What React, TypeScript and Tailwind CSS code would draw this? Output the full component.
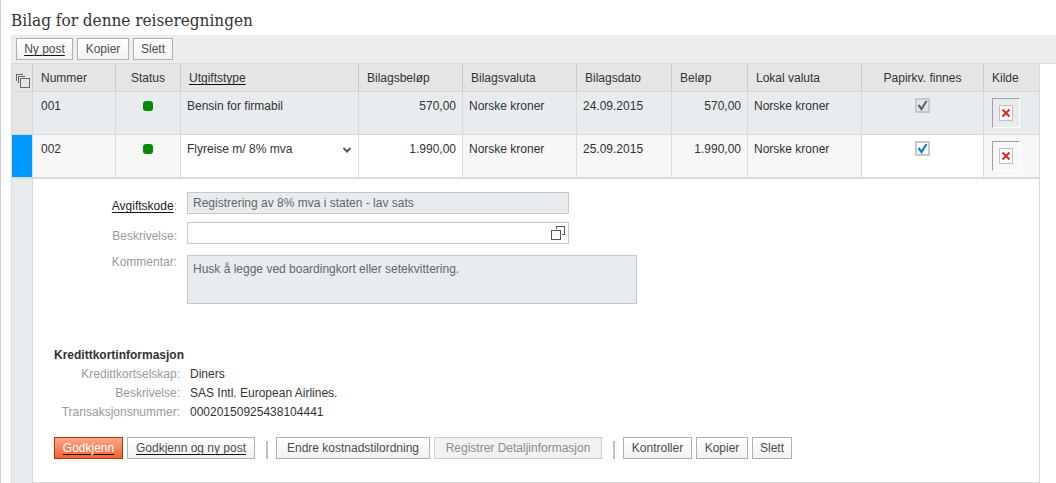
import { useState } from 'react';
import type { ReactNode } from 'react';

const link = 'underline decoration-1 decoration-[#111] underline-offset-2 [text-decoration-skip-ink:none]';

const columns = [
  { label: 'Nummer', width: 'w-[83px]', align: 'text-left' },
  { label: 'Status', width: 'w-[65px]', align: 'text-center' },
  { label: 'Utgiftstype', width: 'w-[178px]', align: 'text-left', sortable: true },
  { label: 'Bilagsbeløp', width: 'w-[104px]', align: 'text-left' },
  { label: 'Bilagsvaluta', width: 'w-[114px]', align: 'text-left' },
  { label: 'Bilagsdato', width: 'w-[95px]', align: 'text-left' },
  { label: 'Beløp', width: 'w-[76px]', align: 'text-left' },
  { label: 'Lokal valuta', width: 'w-[114px]', align: 'text-left' },
  { label: 'Papirkv. finnes', width: 'w-[122px]', align: 'text-center' },
  { label: 'Kilde', width: 'w-[56px]', align: 'text-left' },
];

const receipts = [
  { number: '001', type: 'Bensin for firmabil', amount: '570,00', currency: 'Norske kroner', date: '24.09.2015', selected: false },
  { number: '002', type: 'Flyreise m/ 8% mva', amount: '1.990,00', currency: 'Norske kroner', date: '25.09.2015', selected: true },
];

const cardInfo = [
  { label: 'Kredittkortselskap:', value: 'Diners' },
  { label: 'Beskrivelse:', value: 'SAS Intl. European Airlines.' },
  { label: 'Transaksjonsnummer:', value: '00020150925438104441' },
];

type ButtonProps = {
  children: ReactNode;
  width: string;
  primary?: boolean;
  underlined?: boolean;
  disabled?: boolean;
};

const Button = ({ children, width, primary, underlined, disabled }: ButtonProps) => {
  let look = 'border-[#b0b0b0] bg-linear-to-b from-white to-[#f2f2f2] text-[#4c4c4c]';
  if (primary) look = 'border-[#a83a10] bg-linear-to-b from-[#fba687] to-[#f2622e] text-white';
  if (disabled) look = 'border-[#cccccc] bg-[#f2f2f2] text-[#8c8c8c]';
  return (
    <button
      type="button"
      disabled={disabled}
      className={`h-[22px] shrink-0 border text-center leading-4 whitespace-nowrap ${width} ${look} ${underlined ? link : ''}`}
    >
      {children}
    </button>
  );
};

const Separator = () => <span className="ml-[7px] mr-1 h-[18px] w-0.5 self-end bg-[#c0c0c0]" />;

const StackIcon = () => (
  <svg width="14" height="14" viewBox="0 0 14 14" fill="none" stroke="#666" shapeRendering="crispEdges">
    <path d="M0.5 7V0.5H7M2.5 9V2.5H9" />
    <rect x="4.5" y="4.5" width="9" height="9" />
  </svg>
);

const PopupIcon = () => (
  <svg width="14" height="14" viewBox="0 0 14 14" fill="none" stroke="#555" shapeRendering="crispEdges">
    <path d="M5.5 3V0.5H13.5V8.5H11" />
    <rect x="0.5" y="4.5" width="9" height="9" />
  </svg>
);

const BrokenImage = () => (
  <span className="flex h-[30px] w-7 items-center justify-center border border-t-[#a0a0a0] border-r-white border-b-white border-l-[#a0a0a0]">
    <svg width="14" height="16" viewBox="0 0 14 16">
      <rect x="0.5" y="0.5" width="13" height="15" fill="#fff" stroke="#c0c0c0" />
      <path d="M3.5 4.5L10.5 11.5M10.5 4.5L3.5 11.5" stroke="#dd2a1b" strokeWidth="2" />
    </svg>
  </span>
);

const PaperCheckbox = ({ label, disabled }: { label: string; disabled: boolean }) => {
  const [checked, setChecked] = useState(true);
  return (
    <span className="relative mx-auto block size-[15px]">
      <input
        type="checkbox"
        aria-label={label}
        checked={checked}
        disabled={disabled}
        onChange={(e) => setChecked(e.target.checked)}
        className="block size-[15px] appearance-none border-2 border-[#c8c8c8] bg-white disabled:bg-[#dce8f1]"
      />
      {checked && (
        <svg className="pointer-events-none absolute inset-0" width="15" height="15" viewBox="0 0 15 15" fill="none">
          <path d="M3.5 7L6.5 11L11.5 3" stroke={disabled ? '#666' : '#0a84c6'} strokeWidth="2.2" />
        </svg>
      )}
    </span>
  );
};

const App = () => {
  return (
    <main className="min-h-screen border-l border-[#ccc] bg-white pl-2.5 font-['Liberation_Sans',Arial,sans-serif] text-[12px] leading-4 text-[#333]">
      <h1 className="h-[35px] pt-2 font-['DejaVu_Serif_Condensed','DejaVu_Serif',serif] text-[17px] leading-6 whitespace-nowrap">
        Bilag for denne reiseregningen
      </h1>

      <div className="flex gap-1 border-b border-[#d9d9d9] bg-[#ededed] pt-[3px] pb-[3px] pl-[5px]">
        <Button width="w-[57px]" underlined>Ny post</Button>
        <Button width="w-[52px]">Kopier</Button>
        <Button width="w-10">Slett</Button>
      </div>

      <div className="pr-4">
        <table className="w-full table-fixed border-separate border-spacing-0">
          <thead>
            <tr className="h-7 bg-[#e5e5e5]">
              <th className="w-[22px] border border-t-0 border-[#d9d9d9] border-r-[#c8c8c8] p-0 pt-[7px] pl-1" aria-label="Merk alle">
                <StackIcon />
              </th>
              {columns.map((col) => (
                <th
                  key={col.label}
                  className={`border-r border-b border-r-[#c8c8c8] border-b-[#d9d9d9] px-2 py-0 font-normal whitespace-nowrap last:border-r-[#d9d9d9] ${col.width} ${col.align}`}
                >
                  {col.sortable ? <a href="#utgiftstype" className={link}>{col.label}</a> : col.label}
                </th>
              ))}
            </tr>
          </thead>
          <tbody>
            {receipts.map((row) => {
              const edge = row.selected ? 'border-r border-b-2 border-[#dadada] py-0' : 'border-r border-b border-[#dadada] py-0';
              const base = `${edge} ${row.selected ? 'bg-[#f7f7f7]' : 'bg-[#e8ecef]'} pt-1.5 align-top whitespace-nowrap`;
              const editable = `${edge} ${row.selected ? 'bg-white' : 'bg-[#e8ecef]'} pt-1.5 align-top whitespace-nowrap`;
              return (
                <tr key={row.number} className={row.selected ? 'h-11' : 'h-[43px]'}>
                  <td className={`border-l ${edge} ${row.selected ? 'bg-[#0099ff]' : 'bg-[#e5e5e5]'}`} />
                  <td className={`${base} pl-2`}>{row.number}</td>
                  <td className={base}>
                    <span className="mx-auto mt-[3px] block size-2.5 rounded-[3px] bg-[#048a04]" />
                  </td>
                  <td className={editable}>
                    {row.selected ? (
                      <span className="relative block">
                        <select aria-label="Utgiftstype" className="block w-full appearance-none bg-transparent pl-1.5 leading-4">
                          <option>{row.type}</option>
                          <option>Bensin for firmabil</option>
                        </select>
                        <svg className="pointer-events-none absolute top-1.5 right-1.5" width="10" height="6" viewBox="0 0 10 6" fill="none">
                          <path d="M1.5 1L5 4.5L8.5 1" stroke="#555" strokeWidth="2" />
                        </svg>
                      </span>
                    ) : (
                      <span className="pl-1.5">{row.type}</span>
                    )}
                  </td>
                  <td className={`${editable} pr-1.5 text-right`}>{row.amount}</td>
                  <td className={`${base} pl-1.5`}>{row.currency}</td>
                  <td className={`${base} pl-1.5`}>{row.date}</td>
                  <td className={`${base} pr-1.5 text-right`}>{row.amount}</td>
                  <td className={`${base} pl-1.5`}>{row.currency}</td>
                  <td className={editable}>
                    <PaperCheckbox label={`Papirkvittering finnes ${row.number}`} disabled={!row.selected} />
                  </td>
                  <td className={`${base} pl-2`}>
                    <BrokenImage />
                  </td>
                </tr>
              );
            })}

            <tr>
              <td className="border-r border-l border-[#d9d9d9] bg-[#e8ecef]" />
              <td colSpan={10} className="border-r border-b border-[#dadada] p-0 pt-[13px] pb-[23px]">
                <div className="grid grid-cols-[144px_1fr] gap-x-2.5 text-[#999]">
                  <label htmlFor="avgiftskode" className="self-end text-right">
                    <span className={`text-[#222] ${link}`}>Avgiftskode</span>:
                  </label>
                  <input
                    id="avgiftskode"
                    readOnly
                    defaultValue="Registrering av 8% mva i staten - lav sats"
                    className="h-[22px] w-full max-w-[382px] border border-[#c8c8c8] bg-[#e8ecef] px-[5px] text-[#666]"
                  />
                  <label htmlFor="beskrivelse" className="mt-2 self-end text-right">Beskrivelse:</label>
                  <div className="relative mt-2 w-full max-w-[382px]">
                    <input id="beskrivelse" className="block h-[22px] w-full border border-[#c8c8c8] bg-white px-[5px] text-[#333]" />
                    <button type="button" aria-label="Åpne beskrivelse" className="absolute top-1 right-1">
                      <PopupIcon />
                    </button>
                  </div>
                  <label htmlFor="kommentar" className="mt-2.5 text-right">Kommentar:</label>
                  <textarea
                    id="kommentar"
                    readOnly
                    defaultValue="Husk å legge ved boardingkort eller setekvittering."
                    className="mt-[11px] block h-[49px] w-full max-w-[450px] resize-none border border-[#c8c8c8] bg-[#e8ecef] p-[5px] text-[#666]"
                  />
                </div>

                <div className="mt-[42px] pl-[21px] leading-[19px]">
                  <h2 className="font-bold">Kredittkortinformasjon</h2>
                  <dl className="grid grid-cols-[126px_1fr] gap-x-2.5">
                    {cardInfo.map((item) => (
                      <div key={item.label} className="contents">
                        <dt className="text-right text-[#999]">{item.label}</dt>
                        <dd>{item.value}</dd>
                      </div>
                    ))}
                  </dl>
                </div>

                <div className="mt-[15px] flex gap-1 pl-[21px]">
                  <Button width="w-[69px]" primary underlined>Godkjenn</Button>
                  <Button width="w-32" underlined>Godkjenn og ny post</Button>
                  <Separator />
                  <Button width="w-[154px]">Endre kostnadstilordning</Button>
                  <Button width="w-[168px]" disabled>Registrer Detaljinformasjon</Button>
                  <Separator />
                  <Button width="w-[69px]">Kontroller</Button>
                  <Button width="w-[52px]">Kopier</Button>
                  <Button width="w-10">Slett</Button>
                </div>
              </td>
            </tr>
          </tbody>
        </table>
      </div>
    </main>
  );
};

export default App;
